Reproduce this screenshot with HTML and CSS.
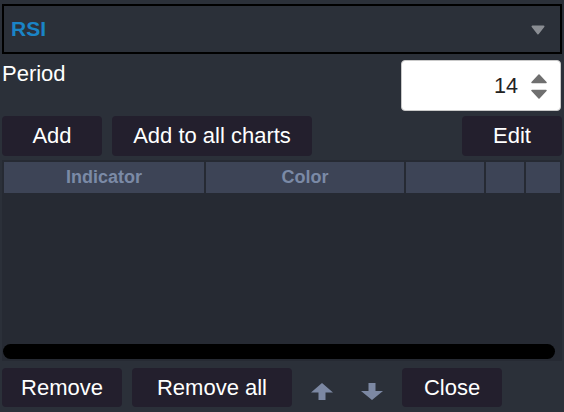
FILE: index.html
```html
<!DOCTYPE html>
<html>
<head>
<meta charset="utf-8">
<link rel="stylesheet" href="styles.css">
</head>
<body>
<div class="panel">
  <div class="select">
    <span class="select-value">RSI</span>
    <svg class="select-arrow" width="14" height="10" viewBox="0 0 14 10"><path d="M1.5 1.5 H12.5 L7 8.5 Z" fill="#8a8d93" stroke="#8a8d93" stroke-width="2" stroke-linejoin="round"/></svg>
  </div>
  <div class="param-row">
    <span class="param-label">Period</span>
    <div class="number-input">
      <span class="number-value">14</span>
      <svg class="spinner" width="16" height="25" viewBox="0 0 16 25"><path d="M8 1 L15 8.5 H1 Z" fill="#6f6f6f" stroke="#6f6f6f" stroke-width="1.5" stroke-linejoin="round"/><path d="M1 16.5 H15 L8 24 Z" fill="#6f6f6f" stroke="#6f6f6f" stroke-width="1.5" stroke-linejoin="round"/></svg>
    </div>
  </div>
  <div class="btn-row">
    <button class="btn w100">Add</button>
    <button class="btn w200">Add to all charts</button>
    <button class="btn w100 push-right">Edit</button>
  </div>
  <div class="table">
    <div class="thead">
      <div class="th c1">Indicator</div>
      <div class="th c2">Color</div>
      <div class="th c3"></div>
      <div class="th c4"></div>
      <div class="th c5"></div>
    </div>
    <div class="tbody"></div>
    <div class="hscroll"></div>
  </div>
  <div class="btn-row bottom">
    <button class="btn w120">Remove</button>
    <button class="btn w160">Remove all</button>
    <span class="icon-btn">
      <svg width="22" height="17" viewBox="0 0 22 17"><path d="M11 0 L22 9.5 H14.5 V17 H7.5 V9.5 H0 Z" fill="#7c88a3"/></svg>
    </span>
    <span class="icon-btn">
      <svg width="22" height="17" viewBox="0 0 22 17"><path d="M7.5 0 H14.5 V8 H22 L11 17 L0 8 H7.5 Z" fill="#7c88a3"/></svg>
    </span>
    <button class="btn w100">Close</button>
  </div>
</div>
</body>
</html>
```
FILE: styles.css
```css
html, body {
  margin: 0;
  padding: 0;
  background: #2b3039;
  width: 564px;
  height: 412px;
  overflow: hidden;
}
body {
  font-family: "Liberation Sans", Arial, sans-serif;
  color: #ffffff;
}
.panel {
  padding: 4px 2px 0 2px;
}
.select {
  height: 50px;
  box-sizing: border-box;
  border: 2px solid #000000;
  display: flex;
  align-items: center;
  justify-content: space-between;
  padding: 0 15px 0 7px;
}
.select-value {
  color: #1a84c6;
  font-weight: bold;
  font-size: 21px;
}
.select-arrow {
  display: block;
  margin-top: 1px;
}
.param-row {
  margin-top: 6px;
  display: flex;
  justify-content: space-between;
  align-items: flex-start;
}
.param-label {
  font-size: 22px;
  margin-top: 1px;
}
.number-input {
  width: 160px;
  height: 51px;
  box-sizing: border-box;
  margin-right: 1px;
  background: #ffffff;
  border: 1px solid #c9c9c9;
  border-radius: 4px;
  display: flex;
  align-items: center;
  justify-content: flex-end;
  padding-right: 13px;
  gap: 13px;
}
.number-value {
  color: #222222;
  font-size: 21.6px;
}
.spinner {
  display: block;
  margin-top: 1px;
}
.btn-row {
  display: flex;
  gap: 10px;
  margin-top: 5px;
  align-items: center;
}
.btn {
  height: 40px;
  background: #231f2d;
  color: #ffffff;
  border: none;
  border-radius: 4px;
  font-family: "Liberation Sans", Arial, sans-serif;
  font-size: 22px;
  padding: 0;
  cursor: pointer;
}
.w100 { width: 100px; }
.w120 { width: 120px; }
.w160 { width: 160px; }
.w200 { width: 200px; }
.push-right { margin-left: auto; }
.table {
  margin-top: 4px;
  height: 201px;
  box-sizing: border-box;
  background: #262a33;
  padding: 2px;
  display: flex;
  flex-direction: column;
}
.thead {
  display: flex;
  gap: 2px;
  height: 31px;
}
.th {
  background: #3d4456;
  color: #7b8aa6;
  font-weight: bold;
  font-size: 18px;
  display: flex;
  align-items: center;
  justify-content: center;
}
.c1 { width: 200px; }
.c2 { width: 198px; }
.c3 { width: 78px; }
.c4 { width: 38px; }
.c5 { flex: 1; }
.tbody {
  flex: 1;
}
.hscroll {
  height: 15px;
  background: #000000;
  border-radius: 8px;
  margin: 0 5px 0 -1px;
}
.bottom {
  margin-top: 7px;
}
.bottom .btn {
  height: 39px;
}
.icon-btn {
  width: 40px;
  height: 39px;
  display: flex;
  align-items: center;
  justify-content: center;
  padding-top: 8px;
  box-sizing: border-box;
}
.icon-btn svg {
  display: block;
}
```
